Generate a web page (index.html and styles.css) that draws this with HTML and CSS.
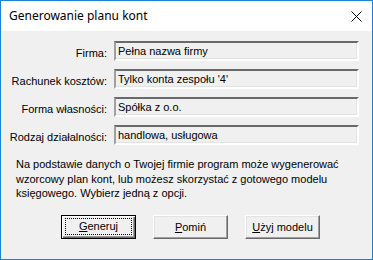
FILE: index.html
```html
<!DOCTYPE html>
<html lang="pl">
<head>
    <meta charset="UTF-8">
    <title>Generowanie planu kont</title>
    <link rel="stylesheet" href="styles.css">
</head>
<body>
    <div class="window">
        <div class="titlebar">
            <span class="title">Generowanie planu kont</span>
            <span class="close">
                <svg width="11" height="11" viewBox="0 0 11 11">
                    <path d="M0.5 0.5 L10.5 10.5 M10.5 0.5 L0.5 10.5" stroke="#000" stroke-width="1" fill="none"/>
                </svg>
            </span>
        </div>
        <div class="content">
            <div class="fields">
                <label class="label">Firma:</label>
                <div class="field">Pełna nazwa firmy</div>
                <label class="label">Rachunek kosztów:</label>
                <div class="field">Tylko konta zespołu '4'</div>
                <label class="label">Forma własności:</label>
                <div class="field">Spółka z o.o.</div>
                <label class="label">Rodzaj działalności:</label>
                <div class="field">handlowa, usługowa</div>
            </div>
            <p class="info">Na podstawie danych o Twojej firmie program może wygenerować wzorcowy plan kont, lub możesz skorzystać z gotowego modelu księgowego. Wybierz jedną z opcji.</p>
            <div class="buttons">
                <button class="btn default"><span class="focus"><u>G</u>eneruj</span></button>
                <button class="btn"><span><u>P</u>omiń</span></button>
                <button class="btn"><span><u>U</u>żyj modelu</span></button>
            </div>
        </div>
    </div>
</body>
</html>
```

FILE: styles.css
```css
body {
    margin: 0;
    padding: 0;
    background: #ffffff;
}
.window {
    width: 373px;
    height: 260px;
    box-sizing: border-box;
    border: 1px solid #1883d7;
    display: flex;
    flex-direction: column;
    font-family: "Liberation Sans", Arial, sans-serif;
    font-size: 11px;
    color: #000;
}
.titlebar {
    height: 30px;
    background: #ffffff;
    display: flex;
    align-items: center;
    justify-content: space-between;
    padding-left: 8px;
    padding-right: 10px;
}
.title {
    font-family: "Noto Sans", sans-serif;
    font-size: 12px;
    margin-top: -1px;
}
.close {
    display: flex;
}
.content {
    flex: 1;
    background: #f0f0f0;
}
.fields {
    display: grid;
    grid-template-columns: 99px 245px;
    column-gap: 7px;
    row-gap: 8px;
    padding: 10px 0 0 7px;
}
.label {
    text-align: right;
    align-self: end;
    padding-bottom: 2px;
}
.field {
    height: 20px;
    box-sizing: border-box;
    border-top: 2px solid #696969;
    border-left: 2px solid #a0a0a0;
    border-right: 2px solid #ffffff;
    border-bottom: 2px solid #ffffff;
    box-shadow: inset -1px -1px 0 #e3e3e3;
    padding: 1px 0 0 2px;
    line-height: 14px;
    background: #f0f0f0;
}
.info {
    margin: 12px 0 0 15px;
    width: 330px;
    line-height: 14.5px;
}
.buttons {
    display: flex;
    gap: 17px;
    padding-left: 60px;
    margin-top: 14px;
}
.btn {
    width: 75px;
    height: 24px;
    padding: 0;
    font-family: "Liberation Sans", Arial, sans-serif;
    font-size: 11px;
    color: #000;
    background: #f0f0f0;
    border: 1px solid;
    border-color: #ffffff #696969 #696969 #ffffff;
    box-shadow: inset -1px -1px 0 #a0a0a0, inset 1px 1px 0 #e3e3e3;
    display: flex;
    align-items: center;
    justify-content: center;
}
.btn.default {
    border: 1px solid #000;
    box-shadow: inset 1px 1px 0 #ffffff, inset -1px -1px 0 #696969, inset -2px -2px 0 #a0a0a0;
}
.focus {
    width: 65px;
    height: 15px;
    line-height: 15px;
    outline: 1px dotted #000;
}
```
